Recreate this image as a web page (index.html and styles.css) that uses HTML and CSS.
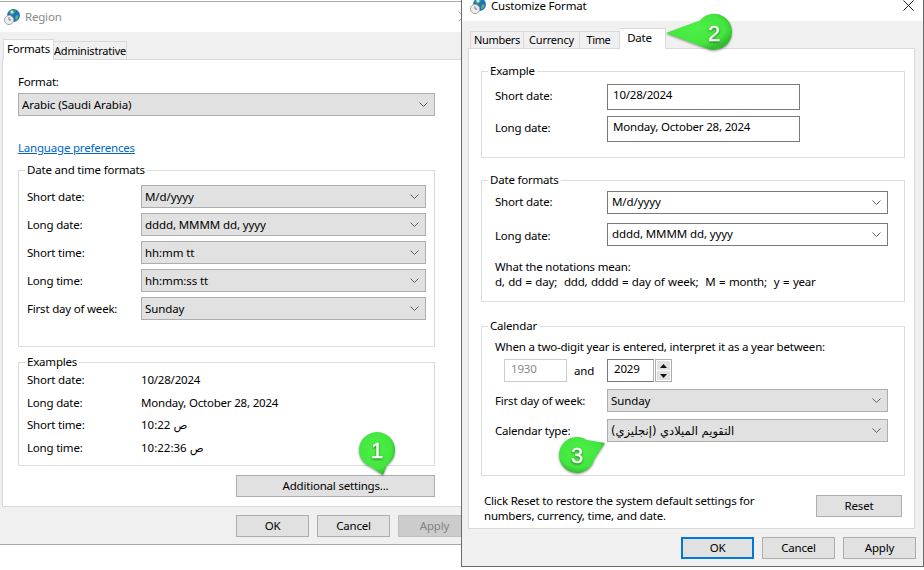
FILE: index.html
```html
<!DOCTYPE html>
<html lang="en">
<head>
<meta charset="utf-8">
<title>Region and Customize Format</title>
<link rel="stylesheet" href="styles.css">
</head>
<body>
<svg class="defs" width="0" height="0" aria-hidden="true">
  <defs>
    <symbol id="globe" viewBox="0 0 16 16">
      <circle cx="9.500" cy="6.500" r="6.500" fill="#1f6fc9"/>
      <path d="M6 1.500c2-1.200 5-1 6 .5-.5 1.500-2 1.500-2.500 3-.6 1.500-2.500 1-3.500 0C5.200 4 5 2.500 6 1.500z" fill="#38a34a"/>
      <path d="M12 6.500c1-.5 2-.3 2.600.3-.2 2-1 3.800-2.600 4.700-1-1.200-1-3.800 0-5z" fill="#5bb85a"/>
      <circle cx="8" cy="3" r="1.600" fill="#bfe3ff"/>
      <circle cx="5" cy="11" r="4.600" fill="#ececec" stroke="#a5a5a5"/>
      <path d="M5 8.200V11h2.200" fill="none" stroke="#7a7a7a"/>
    </symbol>
    <symbol id="chev" viewBox="0 0 9 5">
      <path d="M.5.500l4 4 4-4" fill="none" stroke="#606060"/>
    </symbol>
    <symbol id="x-mark" viewBox="0 0 11 11">
      <path d="M.5.500l10 10M10.500.500l-10 10" fill="none" stroke="currentColor"/>
    </symbol>
    <radialGradient id="green" cx="45%" cy="40%" r="60%">
      <stop offset="0" stop-color="#4cf046"/>
      <stop offset=".75" stop-color="#43e63e"/>
      <stop offset="1" stop-color="#33bb30"/>
    </radialGradient>
  </defs>
</svg>

<main class="desktop">
  <section class="window region">
    <header class="titlebar">
      <svg class="app-icon"><use href="#globe"/></svg>
      <span class="title-text title-muted">Region</span>
      <svg class="close close-muted"><use href="#x-mark"/></svg>
    </header>
    <div class="tabstrip">
      <span class="tab tab-formats tab-active">Formats</span>
      <span class="tab tab-admin">Administrative</span>
    </div>
    <div class="panel">
      <div class="format-label">Format:</div>
      <div class="select"><span>Arabic (Saudi Arabia)</span><svg class="chev"><use href="#chev"/></svg></div>
      <a class="link" href="#">Language preferences</a>
      <fieldset class="group group-formats">
        <legend>Date and time formats</legend>
        <div class="rows">
          <div class="row"><span class="lab">Short date:</span><div class="select"><span>M/d/yyyy</span><svg class="chev"><use href="#chev"/></svg></div></div>
          <div class="row"><span class="lab">Long date:</span><div class="select"><span>dddd, MMMM dd, yyyy</span><svg class="chev"><use href="#chev"/></svg></div></div>
          <div class="row"><span class="lab">Short time:</span><div class="select"><span>hh:mm tt</span><svg class="chev"><use href="#chev"/></svg></div></div>
          <div class="row"><span class="lab">Long time:</span><div class="select"><span>hh:mm:ss tt</span><svg class="chev"><use href="#chev"/></svg></div></div>
          <div class="row"><span class="lab">First day of week:</span><div class="select"><span>Sunday</span><svg class="chev"><use href="#chev"/></svg></div></div>
        </div>
      </fieldset>
      <fieldset class="group group-examples">
        <legend>Examples</legend>
        <div class="example-grid">
          <span class="lab">Short date:</span><span>10/28/2024</span>
          <span class="lab">Long date:</span><span>Monday, October 28, 2024</span>
          <span class="lab">Short time:</span><span>10:22 ص</span>
          <span class="lab">Long time:</span><span>10:22:36 ص</span>
        </div>
      </fieldset>
      <div class="additional"><button class="btn btn-wide">Additional settings...</button></div>
    </div>
    <footer class="footer footer-region">
      <button class="btn">OK</button>
      <button class="btn">Cancel</button>
      <button class="btn btn-disabled">Apply</button>
    </footer>
  </section>

  <section class="window custom">
    <header class="titlebar">
      <svg class="app-icon"><use href="#globe"/></svg>
      <span class="title-text">Customize Format</span>
      <svg class="close"><use href="#x-mark"/></svg>
    </header>
    <div class="tabstrip">
      <span class="tab tab-numbers">Numbers</span>
      <span class="tab tab-currency">Currency</span>
      <span class="tab tab-time">Time</span>
      <span class="tab tab-date tab-active">Date</span>
    </div>
    <div class="panel">
      <fieldset class="group group-example">
        <legend>Example</legend>
        <div class="rows rows-example">
          <div class="row"><span class="lab">Short date:</span><div class="textbox"><span>10/28/2024</span></div></div>
          <div class="row"><span class="lab">Long date:</span><div class="textbox"><span>Monday, October 28, 2024</span></div></div>
        </div>
      </fieldset>
      <fieldset class="group group-dates">
        <legend>Date formats</legend>
        <div class="rows rows-dates">
          <div class="row"><span class="lab">Short date:</span><div class="select select-edit"><span>M/d/yyyy</span><svg class="chev"><use href="#chev"/></svg></div></div>
          <div class="row"><span class="lab">Long date:</span><div class="select select-edit"><span>dddd, MMMM dd, yyyy</span><svg class="chev"><use href="#chev"/></svg></div></div>
        </div>
        <p class="notes">What the notations mean:<br><span class="notes-key">d, dd = day;&nbsp; ddd, dddd = day of week;&nbsp; M = month;&nbsp; y = year</span></p>
      </fieldset>
      <fieldset class="group group-calendar">
        <legend>Calendar</legend>
        <div class="two-digit">When a two-digit year is entered, interpret it as a year between:</div>
        <div class="year-row">
          <div class="year year-disabled">1930</div>
          <span class="year-and">and</span>
          <div class="year year-end">2029</div>
          <div class="spin">
            <span class="spin-btn"><svg class="spin-arrow" viewBox="0 0 7 4"><path d="M3.500 0L7 4H0z"/></svg></span>
            <span class="spin-btn"><svg class="spin-arrow" viewBox="0 0 7 4"><path d="M0 0h7L3.500 4z"/></svg></span>
          </div>
        </div>
        <div class="rows rows-calendar">
          <div class="row"><span class="lab">First day of week:</span><div class="select"><span>Sunday</span><svg class="chev"><use href="#chev"/></svg></div></div>
          <div class="row"><span class="lab">Calendar type:</span><div class="select"><span class="arabic" dir="rtl">التقويم الميلادي (إنجليزي)</span><svg class="chev"><use href="#chev"/></svg></div></div>
        </div>
      </fieldset>
      <div class="reset-row">
        <p class="reset-text">Click Reset to restore the system default settings for<br>numbers, currency, time, and date.</p>
        <button class="btn btn-reset">Reset</button>
      </div>
    </div>
    <footer class="footer footer-custom">
      <button class="btn btn-default">OK</button>
      <button class="btn">Cancel</button>
      <button class="btn">Apply</button>
    </footer>
  </section>

  <svg class="badge badge-1" viewBox="0 0 60 60">
    <path class="badge-shape" d="M34 50L22 42A18 18 0 1 1 38 40Z"/>
    <text class="badge-num" x="28" y="33">1</text>
  </svg>
  <svg class="badge badge-2" viewBox="0 0 70 50">
    <path class="badge-shape" d="M2 20L36 7.500A18 18 0 1 1 42 35Z"/>
    <text class="badge-num" x="50" y="28">2</text>
  </svg>
  <svg class="badge badge-3" viewBox="0 0 60 60">
    <path class="badge-shape" d="M45 15L27 12A18 18 0 1 0 34.500 31Z"/>
    <text class="badge-num" x="17" y="35">3</text>
  </svg>
</main>
</body>
</html>
```
FILE: styles.css
```css
* { box-sizing: border-box; }
html, body { margin: 0; padding: 0; background: #fff; }
body {
  font: 11.5px/16px "Noto Sans", "DejaVu Sans", sans-serif;
  letter-spacing: -.2px;
  color: #000;
}
.defs { position: absolute; }
.desktop { position: relative; width: 924px; height: 570px; overflow: hidden; background: #fff; }

.window { position: absolute; background: #f0f0f0; }
.region { left: 0; top: 1px; width: 475px; height: 544px; border-top: 1px solid #a9a9a9; border-bottom: 1px solid #a9a9a9; }
.custom { left: 461px; top: -10px; width: 463px; height: 577px; border: 1px solid #6b6b6b; z-index: 2; }

.titlebar { position: relative; height: 30px; background: #fff; display: flex; align-items: center; gap: 5px; font-size: 11.5px; line-height: 10px; }
.region .titlebar { padding-left: 4px; }
.custom .titlebar { padding-left: 8px; }
.app-icon { width: 16px; height: 16px; margin-top: -1px; }
.title-text { margin-top: -1px; }
.title-muted { color: #8a8a8a; }
.close { position: absolute; top: 9px; right: 9px; width: 11px; height: 11px; color: #222; }
.close-muted { right: 6px; color: #aaa; }

.tabstrip { height: 27px; display: flex; align-items: flex-end; position: relative; z-index: 1; }
.region .tabstrip { padding-left: 3px; }
.custom .tabstrip { padding-left: 8px; }
.tab { display: block; height: 18px; margin-bottom: -1px; border: 1px solid #d9d9d9; border-left-width: 0; background: #f0f0f0; text-align: center; line-height: 17px; font-size: 11px; }
.tab-active { height: 21px; background: #fff; border-bottom-color: #fff; border-left-width: 1px; line-height: 18px; font-size: 11.5px; }
.tab-formats { width: 51px; }
.tab-admin { width: 73px; height: 19px; }
.tab-numbers { width: 54px; border-left-width: 1px; line-height: 15px; letter-spacing: -.3px; }
.tab-currency { width: 56px; line-height: 15px; }
.tab-time { width: 40px; line-height: 15px; letter-spacing: -.4px; padding-right: 2px; }
.tab-date { width: 46px; border-left-width: 0; padding-right: 6px; }

.panel { background: #fff; border: 1px solid #d9d9d9; }
.region .panel { width: 473px; margin-left: 2px; height: 448px; padding: 14px 0 0 15px; }
.custom .panel { width: 447px; margin-left: 6px; height: 481px; padding: 14px 0 0 12px; }

.format-label { margin-bottom: 3px; }
.region .panel > .select { width: 417px; }
.link { display: block; width: max-content; margin-top: 24px; color: #0066cc; text-decoration: underline; }

.group { margin: 0; min-width: 0; border: 1px solid #dcdcdc; }
.group legend { padding: 0 2px; line-height: 16px; }
.region .group { width: 417px; padding: 7px 8px 26px; }
.region .group legend { margin-left: -2px; }
.custom .group { width: 424px; padding: 5px 16px 15px 13px; }
.custom .group legend { margin-left: -7px; }

.region .group-formats { margin-top: 6px; }
.region .group-examples { margin-top: 7px; padding-top: 2px; padding-bottom: 2px; }
.custom .group-dates { margin-top: 14px; padding-top: 3px; padding-bottom: 12px; }
.custom .group-calendar { margin-top: 16px; padding-bottom: 33px; }

.rows { display: flex; flex-direction: column; gap: 5px; }
.rows-example { gap: 6px; }
.rows-dates { gap: 9px; }
.rows-calendar { gap: 7px; margin-top: 7px; }
.row { display: flex; align-items: center; }
.lab { flex: none; }
.region .lab { width: 114px; }
.custom .lab { width: 112px; }
.custom .rows-example .lab { padding-bottom: 2px; }
.custom .rows-dates .row:first-child .lab { padding-bottom: 2px; }
.custom .rows-dates .row:last-child .lab { padding-top: 2px; }
.select-edit span { padding-bottom: 2px; }

.select { flex: 1; height: 23px; display: flex; align-items: center; justify-content: space-between; padding: 0 5px 0 3px; background: #e1e1e1; border: 1px solid #adadad; min-width: 0; letter-spacing: -.1px; }
.select-edit { background: #fff; border-color: #7a7a7a; padding-left: 4px; }
.chev { width: 9px; height: 5px; margin-right: 1px; }
.arabic { font-family: "DejaVu Sans", sans-serif; font-size: 11.5px; letter-spacing: 0; white-space: nowrap; }

.example-grid { display: grid; grid-template-columns: 114px 1fr; grid-auto-rows: 22.67px; }

.additional { display: flex; justify-content: flex-end; margin-top: 9px; width: 417px; }

.btn { display: block; width: 73px; height: 22px; padding: 0; font: inherit; letter-spacing: inherit; color: #000; background: #e1e1e1; border: 1px solid #adadad; text-align: center; }
.btn-wide { width: 199px; }
.btn-reset { width: 86px; }
.btn-disabled { background: #cccccc; border-color: #bfbfbf; color: #838383; }
.btn-default { border: 2px solid #0078d7; }

.footer { display: flex; justify-content: flex-end; gap: 8px; padding-top: 8px; }
.footer-region { width: 471px; }
.footer-custom { padding-right: 7px; }

.textbox { width: 193px; height: 26px; padding: 2px 5px 0; border: 1px solid #7a7a7a; background: #fff; }
.notes { margin: 13px 0 0; line-height: 15px; }
.notes-key { word-spacing: .7px; }
.two-digit { margin-bottom: 4px; }
.year-row { display: flex; align-items: stretch; height: 23px; margin-left: 9px; }
.year { height: 23px; padding: 1px 6px; background: #fff; }
.year-disabled { width: 63px; border: 1px solid #cccccc; color: #8a8a8a; }
.year-and { width: 40px; padding-left: 7px; line-height: 24px; }
.year-end { width: 47px; border: 1px solid #7a7a7a; border-right-color: #adadad; }
.spin { width: 17px; margin-left: 1px; border: 1px solid #adadad; display: flex; flex-direction: column; gap: 1px; padding: 1px; background: #fff; }
.spin-btn { flex: 1; background: #e1e1e1; display: flex; align-items: center; justify-content: center; }
.spin-arrow { width: 7px; height: 4px; fill: #111; }

.reset-row { display: flex; justify-content: space-between; width: 418px; margin: 17px 0 0 3px; }
.reset-text { margin: 0; line-height: 15px; }
.btn-reset { margin-top: 2px; }

.badge { position: absolute; z-index: 3; overflow: visible; }
.badge-1 { left: 349px; top: 425px; width: 60px; height: 60px; }
.badge-2 { left: 664px; top: 13px; width: 70px; height: 50px; }
.badge-3 { left: 560px; top: 428px; width: 60px; height: 60px; }
.badge-shape { fill: url(#green); filter: drop-shadow(0 1px 1px rgba(60, 60, 60, .55)); }
.badge-num { font: 22px "Liberation Sans", sans-serif; letter-spacing: 0; fill: #fff; text-anchor: middle; stroke: #fff; stroke-width: .4px; filter: drop-shadow(0 1px 1px rgba(0, 0, 0, .5)); }
```
